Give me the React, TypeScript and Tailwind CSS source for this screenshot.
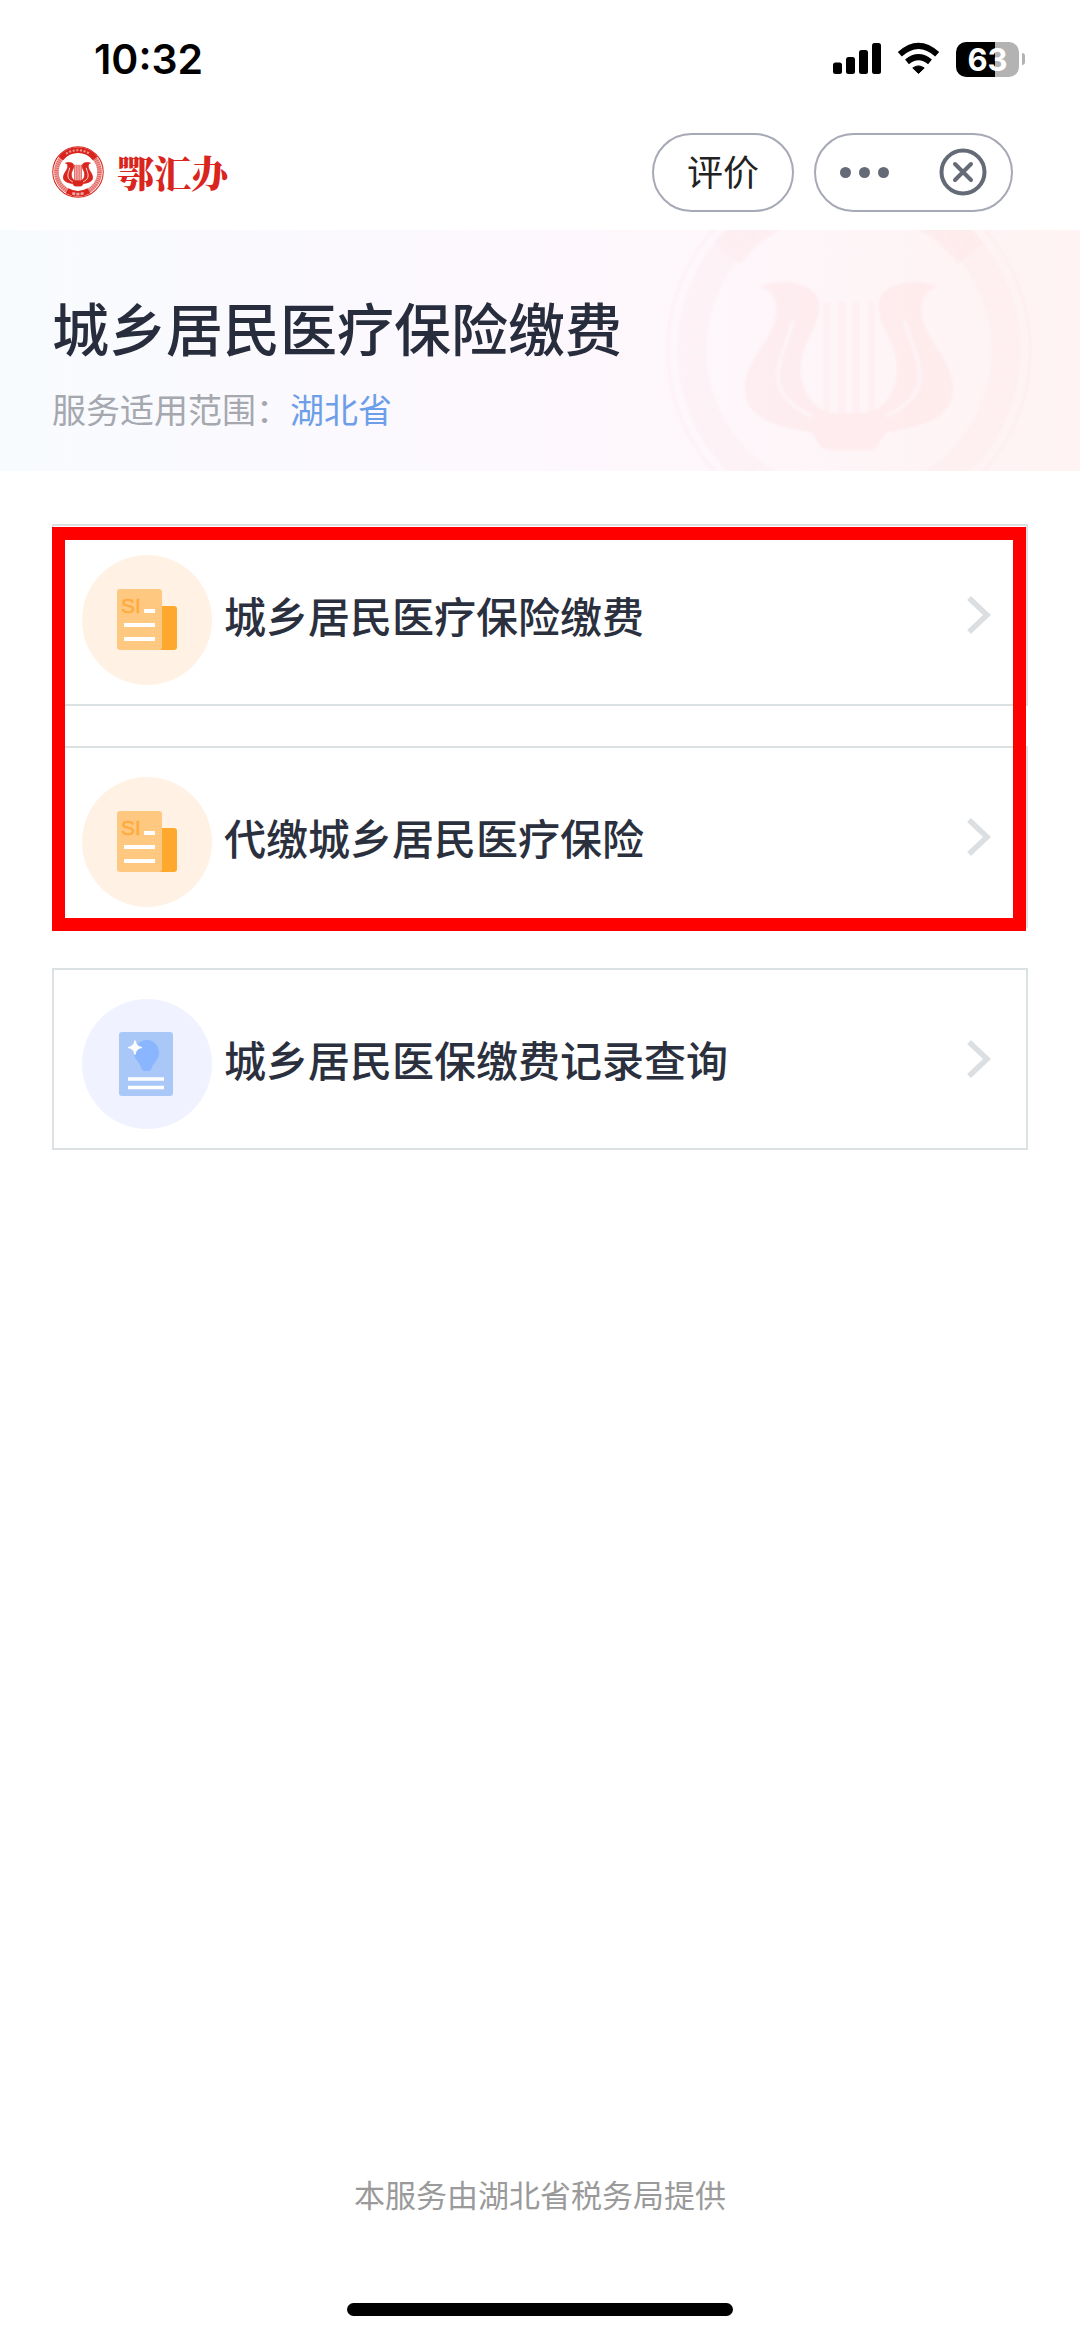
import React from "react";

const CJK = "font-['Noto_Sans_CJK_SC',sans-serif]";

const LYRE =
  "M26 33C32 30 42 32 42 38C42 44 37 48 37 55C37 62 41 66 45 67H55C59 66 63 62 63 55C63 48 58 44 58 38C58 32 68 30 74 33C70 34 69 37 70 42C72 49 79 54 78 62C77 69 68 71 61 72C58 73 59 77 55 77H45C41 77 42 73 39 72C32 71 23 69 22 62C21 54 28 49 30 42C31 37 30 34 26 33Z";

function LogoEmblem() {
  return (
    <svg viewBox="0 0 100 100" className="size-[52px]" aria-hidden="true">
      <circle cx="50" cy="50" r="48.500" fill="none" stroke="currentColor" strokeWidth="2" />
      <circle cx="50" cy="50" r="41.500" fill="none" stroke="currentColor" strokeWidth="9" opacity="0.4" />
      <circle cx="50" cy="50" r="41.500" fill="none" stroke="currentColor" strokeWidth="9" strokeDasharray="2 2" opacity="0.5" />
      <path d="M17 24A42 42 0 0 1 83 24" fill="none" stroke="currentColor" strokeWidth="11" />
      <path d="M29 86A42 42 0 0 0 71 86" fill="none" stroke="currentColor" strokeWidth="11" />
      <path d="M27 15A42 42 0 0 1 73 15" fill="none" stroke="#fff" strokeWidth="4" strokeDasharray="4 3" opacity="0.5" />
      <path d="M39 91A42 42 0 0 0 61 91" fill="none" stroke="#fff" strokeWidth="5" strokeDasharray="6 2" opacity="0.6" />
      <path d={LYRE} fill="currentColor" stroke="currentColor" strokeWidth="1.500" />
      <path d="M34 42C33 49 29 54 31 60C32 64 36 67 40 69M66 42C67 49 71 54 69 60C68 64 64 67 60 69" fill="none" stroke="#fff" strokeWidth="1.500" />
      <path d="M44 36V68M48 36V68M52 36V68M56 36V68" fill="none" stroke="currentColor" strokeWidth="2" />
    </svg>
  );
}

function Watermark() {
  return (
    <svg viewBox="0 0 100 100" className="size-[370px] blur-[1px]" fill="none" stroke="#fb9a9a" aria-hidden="true">
      <g opacity="0.085">
        <circle cx="50" cy="50" r="49" strokeWidth="1" opacity="0.4" />
        <circle cx="50" cy="50" r="42.500" strokeWidth="8" opacity="0.4" />
        <circle cx="50" cy="50" r="42.500" strokeWidth="6" strokeDasharray="2 3" opacity="0.3" />
        <path d="M17 24A42 42 0 0 1 83 24" strokeWidth="9" opacity="0.8" />
        <path d={LYRE} fill="#fb9a9a" stroke="none" />
        <path d="M44 37V67M48 37V67M52 37V67M56 37V67" strokeWidth="2" opacity="0.6" />
      </g>
      <path d="M35 42C33 49 30 54 31 59C32 63 36 66 40 68M65 42C67 49 70 54 69 59C68 63 64 66 60 68" stroke="#fef6fa" strokeWidth="1" opacity="0.6" />
    </svg>
  );
}

function StatusBar() {
  return (
    <div className="flex h-[118px] items-center justify-between pr-[55px] pl-[94px]">
      <time className="font-['Inter',sans-serif] text-[41px] leading-[48px] font-semibold text-black">10:32</time>
      <div className="flex items-center gap-4">
        <svg className="h-9 w-12" viewBox="0 0 48 36" aria-hidden="true">
          <rect x="0" y="21.500" width="9" height="11.500" rx="2.500" />
          <rect x="13" y="16" width="9" height="17" rx="2.500" />
          <rect x="26" y="9" width="9" height="24" rx="2.500" />
          <rect x="39" y="2" width="9" height="31" rx="2.500" />
        </svg>
        <svg className="h-9 w-[43px]" viewBox="0 0 43 36" aria-hidden="true">
          <path d="M21.500 32.500L15.800 27Q21.500 22.800 27.200 27Z" stroke="#000" strokeWidth="1" strokeLinejoin="round" />
          <path d="M10 20.800Q21.500 11.500 33 20.800" fill="none" stroke="#000" strokeWidth="6" />
          <path d="M2.800 13.300Q21.500 -3.500 40.200 13.300" fill="none" stroke="#000" strokeWidth="6" />
        </svg>
        <div className="flex items-center gap-[3px]">
          <div className="flex h-[35px] w-[63px] items-center justify-center rounded-[10px] bg-linear-to-r from-black from-62% to-[#b3b3b3] to-62% font-['Inter',sans-serif] text-[31px] leading-none font-bold text-white">
            63
          </div>
          <span className="h-3 w-[3px] rounded-r-full bg-[#b3b3b3]" />
        </div>
      </div>
    </div>
  );
}

function Header() {
  return (
    <header className="flex h-28 items-center justify-between pr-[67px] pb-1 pl-[52px]">
      <div className="flex items-center gap-[13px] text-[#d9251d]">
        <LogoEmblem />
        <span className="font-['Noto_Serif_CJK_SC','Noto_Sans_CJK_SC',serif] text-[37px] leading-[48px] font-black">鄂汇办</span>
      </div>
      <div className="flex gap-5">
        <button type="button" className="h-[79px] w-[142px] rounded-full border-2 border-[#a6a9b6] pb-1 text-[36px] leading-[48px] text-[#222]">
          评价
        </button>
        <div className="flex h-[79px] w-[199px] items-center justify-between rounded-full border-2 border-[#a6a9b6] px-6 text-[#646a76]">
          <button type="button" aria-label="更多" className="flex h-12 items-center gap-2">
            <span className="size-[11px] rounded-full bg-current" />
            <span className="size-[11px] rounded-full bg-current" />
            <span className="size-[11px] rounded-full bg-current" />
          </button>
          <button type="button" aria-label="关闭">
            <svg className="size-12" viewBox="0 0 48 48" fill="none" stroke="currentColor" strokeWidth="4" strokeLinecap="round" aria-hidden="true">
              <circle cx="24" cy="24" r="21.500" />
              <path d="M16 16L32 32M32 16L16 32" />
            </svg>
          </button>
        </div>
      </div>
    </header>
  );
}

function SocialInsuranceIcon() {
  return (
    <svg className="size-[130px]" viewBox="0 0 130 130" aria-hidden="true">
      <circle cx="65" cy="65" r="65" fill="#fff2e5" />
      <rect x="70" y="51" width="25" height="44" rx="3" fill="#ffa82e" />
      <rect x="35" y="34" width="45" height="61" rx="3" fill="#ffc880" />
      <text x="39" y="58" fontSize="21" fill="#ffab3c" stroke="#ffab3c" strokeWidth="0.500" fontFamily="Liberation Sans">SI</text>
      <path d="M62 56H73M42 70H73M42 84H73" stroke="#fff" strokeWidth="4" />
    </svg>
  );
}

function RecordIcon() {
  return (
    <svg className="size-[130px]" viewBox="0 0 130 130" aria-hidden="true">
      <circle cx="65" cy="65" r="65" fill="#f0f3ff" />
      <rect x="37" y="33" width="54" height="64" rx="3" fill="#a9c8f8" />
      <path d="M65 41C72 41 77 47 77 54C77 60 73 62 70 68Q69 72 67 72H62Q60 72 59 68C57 62 52 60 52 54C52 47 58 41 65 41Z" fill="#8ab5ff" />
      <path d="M53 41.500Q54 47.500 60 48.500Q54 49.500 53 55.500Q52 49.500 46 48.500Q52 47.500 53 41.500Z" fill="#fff" stroke="#fff" strokeWidth="1" />
      <path d="M46 80H82M46 88.500H82" stroke="#fff" strokeWidth="3.500" />
    </svg>
  );
}

function ServiceLink({ label, icon }: { label: string; icon: React.ReactNode }) {
  return (
    <a href="#" className="flex h-[182px] items-center border-2 border-[#dce1e3] pr-[35px] pl-7">
      <span className="mt-[10px] mr-3 shrink-0">{icon}</span>
      <span className="flex-1 text-[42px] leading-[60px] font-medium text-[#2b303e]">{label}</span>
      <svg className="h-10 w-6" viewBox="0 0 24 40" fill="none" stroke="#dcdfe1" strokeWidth="5.500" aria-hidden="true">
        <path d="M2 3L20 20L2 37" />
      </svg>
    </a>
  );
}

export default function App() {
  return (
    <div className={`flex min-h-screen flex-col bg-white ${CJK}`}>
      <StatusBar />
      <Header />
      <section className="relative h-[241px] overflow-hidden bg-linear-to-r from-[#f8fbfe] via-[#fdf8fe] to-[#fff3f3] px-[52px] pt-[55px]">
        <div className="absolute -top-[65px] right-[46px]">
          <Watermark />
        </div>
        <div className="relative">
          <h1 className="text-[57px] leading-[82px] font-medium text-[#272d3c]">城乡居民医疗保险缴费</h1>
          <p className="mt-[17px] text-[34px] leading-[50px] text-[#a5a8af]">
            服务适用范围：<span className="text-[#6d9fe9]">湖北省</span>
          </p>
        </div>
      </section>
      <main className="flex flex-1 flex-col gap-10 px-[52px] pt-[53px]">
        <div className="relative flex flex-col gap-10">
          <ServiceLink label="城乡居民医疗保险缴费" icon={<SocialInsuranceIcon />} />
          <ServiceLink label="代缴城乡居民医疗保险" icon={<SocialInsuranceIcon />} />
          <div className="pointer-events-none absolute top-[3px] right-[2px] -bottom-[3px] left-0 border-[13px] border-[#ff0000]" />
        </div>
        <ServiceLink label="城乡居民医保缴费记录查询" icon={<RecordIcon />} />
      </main>
      <footer className="flex flex-col items-center pb-[21px]">
        <p className="text-[31px] leading-[46px] text-[#9a9a9a]">本服务由湖北省税务局提供</p>
        <div className="mt-[86px] h-[13px] w-[386px] rounded-full bg-black" />
      </footer>
    </div>
  );
}
